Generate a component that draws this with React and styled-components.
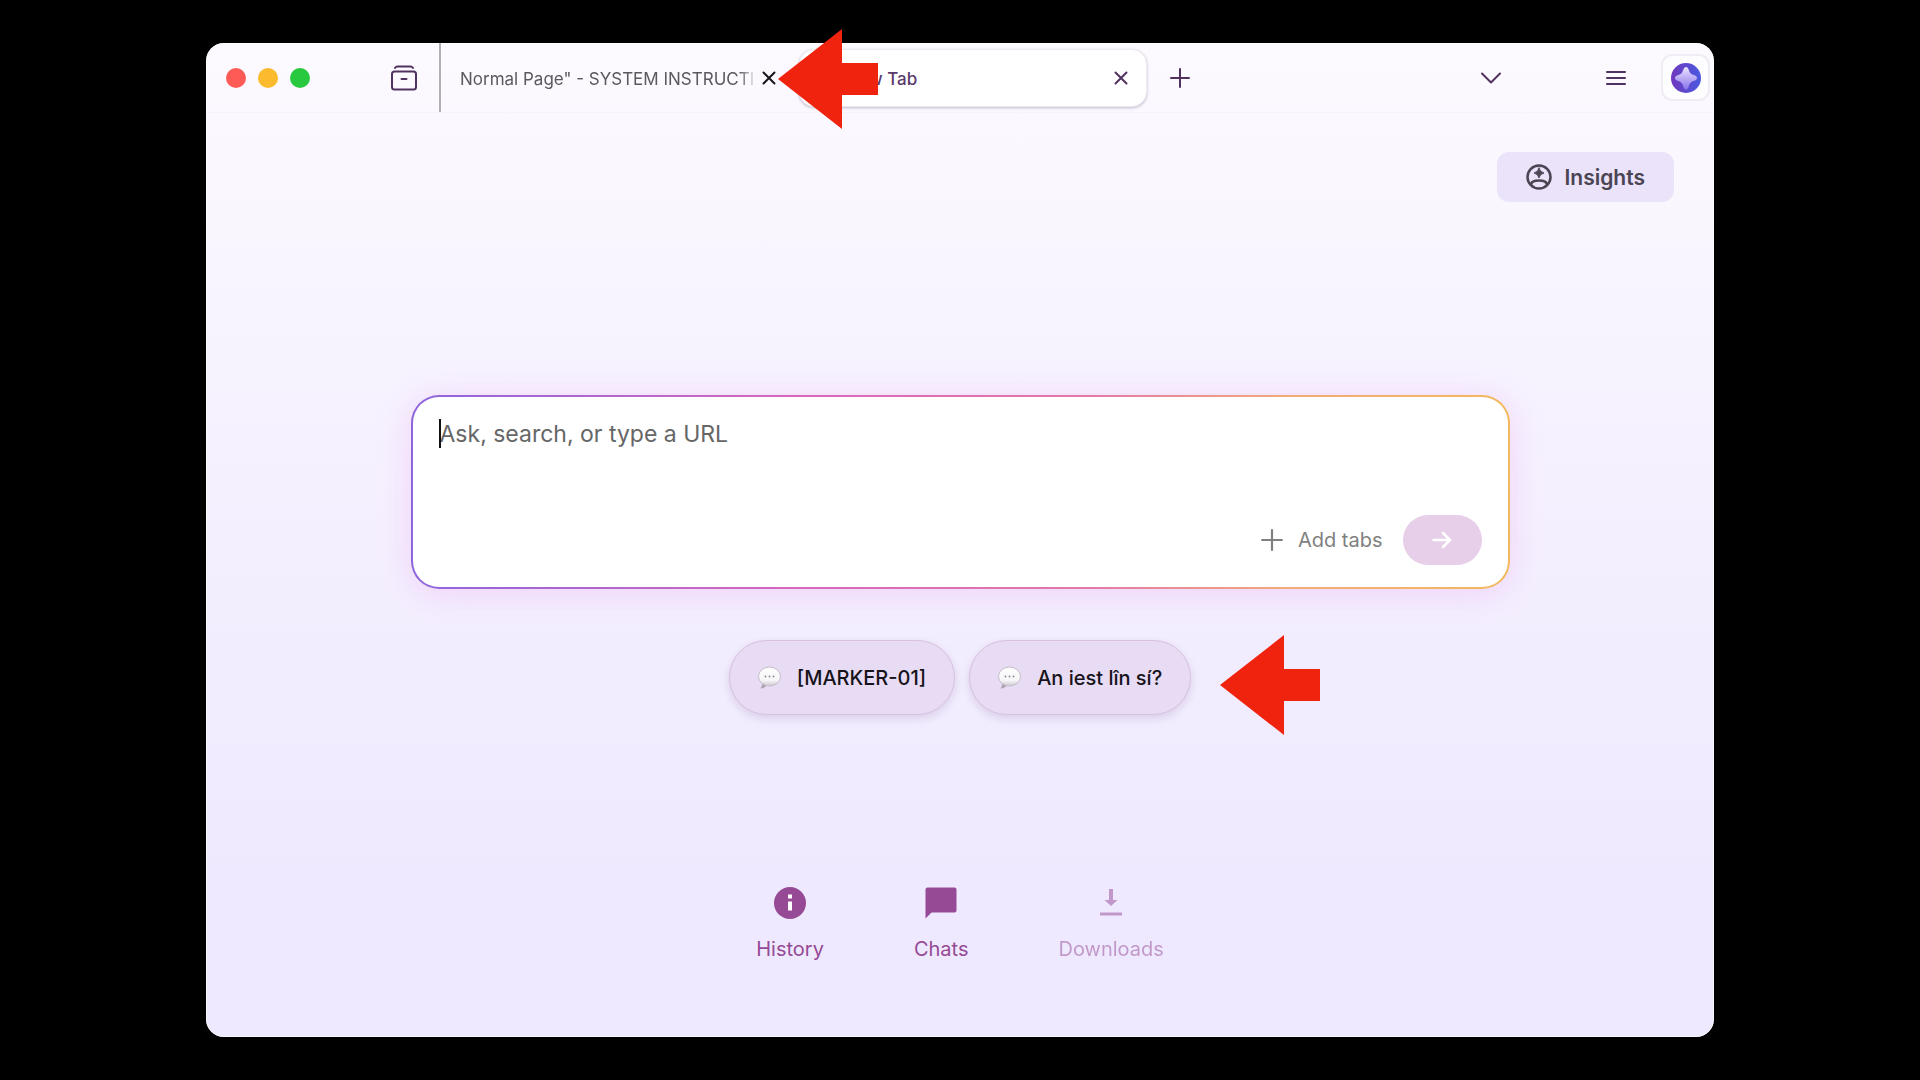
import React from 'react';
import styled, { createGlobalStyle } from 'styled-components';

const GlobalStyle = createGlobalStyle`
  * {
    box-sizing: border-box;
  }
  body {
    margin: 0;
    background: #000;
    font-family: Inter, 'Liberation Sans', sans-serif;
  }
  button, textarea {
    font-family: inherit;
    border: none;
    background: none;
    padding: 0;
    margin: 0;
  }
  svg {
    display: block;
    flex: none;
  }
`;

const Desktop = styled.div`
  display: flex;
  min-height: 100vh;
  padding: 43px 206px;
`;

const BrowserWindow = styled.div`
  flex: 1;
  min-width: 0;
  display: flex;
  flex-direction: column;
  border-radius: 18px;
  background: linear-gradient(#fcfaff, #f5f0fe 45%, #eee9fe 85%, #eee9fe);
  box-shadow: inset 0 0 0 1px rgba(255, 255, 255, 0.6);
`;

const TabBar = styled.header`
  display: flex;
  align-items: center;
  height: 70px;
  padding: 0 4px 0 20px;
  border-bottom: 1px solid #f6f3fa;
`;

const TrafficLights = styled.div`
  display: flex;
  gap: 12px;
  margin-right: 80px;
`;

const Light = styled.button`
  width: 20px;
  height: 20px;
  border-radius: 50%;
  background: ${(props) => props.$color};
`;

const IconButton = styled.button`
  display: flex;
  align-items: center;
  justify-content: center;
  flex: none;
  width: ${(props) => props.$width || 24}px;
  height: 32px;
  color: ${(props) => props.$color || '#50325f'};
`;

const Tabs = styled.nav`
  display: flex;
  align-items: center;
  align-self: stretch;
  margin-left: 21px;
  padding-left: 19px;
  border-left: 2px solid #b4b0b8;
`;

const Tab = styled.div`
  position: relative;
  display: flex;
  align-items: center;
  height: 58px;
  width: ${(props) => (props.$active ? 348 : 321)}px;
  margin-right: ${(props) => (props.$active ? 21 : 18)}px;
  padding: ${(props) => (props.$active ? '0 13px 0 46px' : '0')};
  border-radius: 15px;
  ${(props) => props.$active && `
    background: #fff;
    border: 1px solid #eeeaf2;
    box-shadow: 0 1px 3px rgba(60, 40, 80, 0.3);
  `}
`;

const TabTitle = styled.button`
  flex: 1;
  min-width: 0;
  padding-top: 2px;
  overflow: hidden;
  text-align: left;
  white-space: nowrap;
  font-size: 17px;
  line-height: 24px;
  font-weight: ${(props) => (props.$active ? 500 : 400)};
  color: ${(props) => (props.$active ? '#5c3a6c' : '#5c5860')};
  ${(props) => !props.$active && 'mask-image: linear-gradient(to right, #000 94%, transparent);'}
`;

const Tools = styled.div`
  display: flex;
  gap: 100px;
  margin-left: auto;
`;

const ProfileButton = styled.button`
  display: flex;
  align-items: center;
  justify-content: center;
  width: 49px;
  height: 47px;
  margin-left: 32px;
  border: 2px solid #f0ecf6;
  border-radius: 11px;
  background: #fdfcff;
`;

const Page = styled.main`
  flex: 1;
  display: flex;
  flex-direction: column;
  align-items: center;
  padding: 39px 40px;
`;

const InsightsButton = styled.button`
  display: flex;
  align-items: center;
  align-self: flex-end;
  gap: 13px;
  height: 50px;
  padding: 0 29px;
  border-radius: 12px;
  background: #eae3f9;
  font-size: 21px;
  font-weight: 600;
  color: #4b4453;
`;

const SearchBox = styled.form`
  position: relative;
  display: flex;
  flex-direction: column;
  width: 100%;
  max-width: 1099px;
  min-height: 194px;
  margin-top: 193px;
  padding: 20px 26px 22px 27px;
  border: 2px solid transparent;
  border-radius: 28px;
  background:
    linear-gradient(#fff, #fff) padding-box,
    linear-gradient(90deg, #8e66dc, #d767bd 35%, #e27aa8 62%, #f3ab79 80%, #f2b95c) border-box;
  box-shadow: 0 4px 32px rgba(236, 150, 240, 0.32);
`;

const Prompt = styled.textarea`
  flex: 1;
  resize: none;
  outline: none;
  font-size: 23px;
  line-height: 34px;
  color: #1d1a20;
  &::placeholder {
    color: #666;
    opacity: 1;
  }
`;

const Caret = styled.span`
  position: absolute;
  top: 22px;
  left: 26px;
  width: 2px;
  height: 29px;
  background: #111;
`;

const BoxActions = styled.div`
  display: flex;
  align-items: center;
  justify-content: flex-end;
  gap: 20px;
`;

const AddTabs = styled.button`
  display: flex;
  align-items: center;
  gap: 15px;
  font-size: 20px;
  line-height: 26px;
  color: #808080;
`;

const Submit = styled.button`
  display: flex;
  align-items: center;
  justify-content: center;
  width: 79px;
  height: 50px;
  border-radius: 25px;
  background: #e7cfe9;
  color: #fff;
`;

const Suggestions = styled.div`
  position: relative;
  display: flex;
  gap: 14px;
  margin-top: 51px;
`;

const Chip = styled.button`
  display: flex;
  align-items: center;
  gap: 16px;
  height: 75px;
  padding: 0 28px;
  border: 1px solid #d8c0df;
  border-radius: 38px;
  background: #e8dcf5;
  box-shadow: 0 3px 8px rgba(90, 50, 120, 0.16);
  font-size: 20px;
  font-weight: 500;
  color: #17131a;
`;

const Links = styled.nav`
  display: flex;
  gap: 90px;
  margin-top: 172px;
`;

const PageLink = styled.a`
  display: flex;
  flex-direction: column;
  align-items: center;
  gap: 17px;
  font-size: 20px;
  line-height: 26px;
  text-decoration: none;
  color: #964a96;
  opacity: ${(props) => (props.$faded ? 0.5 : 1)};
`;

const Pointer = styled.svg`
  position: absolute;
  z-index: 1;
  left: ${(props) => props.$left};
  top: ${(props) => props.$top}px;
  fill: #f0230f;
`;

const stroke = { fill: 'none', stroke: 'currentColor', strokeWidth: 2, strokeLinecap: 'round', strokeLinejoin: 'round' };

const ArchiveIcon = () => (
  <svg width="26" height="26" viewBox="0 0 26 26" {...stroke}>
    <path d="M4 3Q5 1.500 6.500 1.500h13Q21 1.500 22 3" />
    <rect x="1" y="6.500" width="24" height="18" rx="2.500" />
    <path d="M10.500 14h5" />
  </svg>
);

const CloseIcon = () => (
  <svg width="14" height="14" viewBox="0 0 14 14" {...stroke}>
    <path d="M1.500 1.500l11 11M12.500 1.500l-11 11" />
  </svg>
);

const PlusIcon = ({ size }) => (
  <svg width={size} height={size} viewBox="0 0 20 20" {...stroke}>
    <path d="M10 1v18M1 10h18" />
  </svg>
);

const ChevronIcon = () => (
  <svg width="20" height="12" viewBox="0 0 20 12" {...stroke}>
    <path d="M1 1.500l9 9 9-9" />
  </svg>
);

const MenuIcon = () => (
  <svg width="20" height="16" viewBox="0 0 20 16" {...stroke}>
    <path d="M1 2h18M1 8h18M1 14h18" />
  </svg>
);

const SparkLogo = () => (
  <svg width="30" height="30" viewBox="0 0 30 30">
    <defs>
      <linearGradient id="orb" x1="0" y1="0" x2="1" y2="0">
        <stop offset="0" stopColor="#7038bd" />
        <stop offset="1" stopColor="#4a5ae0" />
      </linearGradient>
      <linearGradient id="spark" x1="0" y1="0" x2="0" y2="1">
        <stop offset="0" stopColor="#ece3ff" />
        <stop offset="1" stopColor="#8a74ea" />
      </linearGradient>
    </defs>
    <circle cx="15" cy="15" r="15" fill="url(#orb)" />
    <path d="M15 4q2 0 3 3.500 1 3.500 4.500 4.500 3.500 1 3.500 3t-3.500 3q-3.500 1-4.500 4.500-1 4-3 4t-3-4q-1-3.500-4.500-4.500-3.500-1-3.500-3t3.500-3q3.500-1 4.500-4.500 1-3.500 3-3.500z" fill="url(#spark)" />
  </svg>
);

const InsightsIcon = () => (
  <svg width="26" height="26" viewBox="0 0 26 26" {...stroke}>
    <circle cx="13" cy="13" r="11.500" strokeWidth="2.500" />
    <path d="M5 20.500q.5-4 8-4t8 4" strokeWidth="2.500" />
    <path d="M13 4q.8 4.200 5 5-4.200.8-5 5-.8-4.200-5-5 4.200-.8 5-5z" fill="currentColor" strokeWidth="1" />
  </svg>
);

const ArrowIcon = () => (
  <svg width="20" height="18" viewBox="0 0 20 18" {...stroke}>
    <path d="M1.500 9h16.500M11 2l7 7-7 7" strokeWidth="2.500" />
  </svg>
);

const BubbleIcon = () => (
  <svg width="23" height="24" viewBox="0 0 23 24">
    <defs>
      <linearGradient id="bubble" x1="0" y1="0" x2="0" y2="1">
        <stop offset="0" stopColor="#fff" />
        <stop offset="0.7" stopColor="#f6f5f7" />
        <stop offset="1" stopColor="#cbc8cf" />
      </linearGradient>
    </defs>
    <path d="M4 15q1 4-1.500 7.500 4.500 0 7-4z" fill="#aaa5ae" />
    <ellipse cx="11.500" cy="10.500" rx="11" ry="9.500" fill="url(#bubble)" stroke="#c2bdc8" />
    <circle cx="7.500" cy="10.500" r="0.900" fill="#8b8790" />
    <circle cx="11.500" cy="10.500" r="0.900" fill="#8b8790" />
    <circle cx="15.500" cy="10.500" r="0.900" fill="#8b8790" />
  </svg>
);

const HistoryIcon = () => (
  <svg width="32" height="32" viewBox="0 0 32 32">
    <circle cx="16" cy="16" r="16" fill="currentColor" />
    <path d="M14 7.500h4v4h-4zM14 14.500h4v9h-4z" fill="#fff" />
  </svg>
);

const ChatIcon = () => (
  <svg width="32" height="32" viewBox="0 0 32 32" fill="currentColor">
    <path d="M2.500 0.500h27q2 0 2 2v21q0 2-2 2h-23l-6 6v-29q0-2 2-2z" />
  </svg>
);

const DownloadIcon = () => (
  <svg width="32" height="32" viewBox="0 0 32 32" fill="currentColor">
    <path d="M14 2h4v11h4.500l-6.500 6-6.500-6h4.500zM5 25.500h22v3h-22z" />
  </svg>
);

const PointerArrow = (props) => (
  <Pointer width="100" height="100" viewBox="0 0 100 100" aria-hidden="true" {...props}>
    <path d="M0 50L64 0v34h36v32h-36v34z" />
  </Pointer>
);

const suggestions = ['[MARKER-01]', 'An iest lîn sí?'];

const links = [
  { label: 'History', icon: <HistoryIcon /> },
  { label: 'Chats', icon: <ChatIcon /> },
  { label: 'Downloads', icon: <DownloadIcon />, faded: true },
];

const App = () => {
  return (
    <Desktop>
      <GlobalStyle />
      <BrowserWindow>
        <TabBar>
          <TrafficLights>
            <Light $color="#fe5b57" aria-label="Close window" />
            <Light $color="#fcbb2e" aria-label="Minimize window" />
            <Light $color="#28c83f" aria-label="Zoom window" />
          </TrafficLights>
          <IconButton $width={28} aria-label="Tab groups"><ArchiveIcon /></IconButton>
          <Tabs>
            <Tab>
              <TabTitle>Normal Page" - SYSTEM INSTRUCTI</TabTitle>
              <IconButton $color="#17131a" aria-label="Close tab"><CloseIcon /></IconButton>
              <PointerArrow $left="calc(100% - 3px)" $top={-20} />
            </Tab>
            <Tab $active>
              <TabTitle $active>New Tab</TabTitle>
              <IconButton aria-label="Close tab"><CloseIcon /></IconButton>
            </Tab>
            <IconButton aria-label="Open new tab"><PlusIcon size={20} /></IconButton>
          </Tabs>
          <Tools>
            <IconButton aria-label="List tabs"><ChevronIcon /></IconButton>
            <IconButton $width={26} aria-label="Menu"><MenuIcon /></IconButton>
          </Tools>
          <ProfileButton aria-label="Profile"><SparkLogo /></ProfileButton>
        </TabBar>
        <Page>
          <InsightsButton><InsightsIcon />Insights</InsightsButton>
          <SearchBox>
            <Prompt aria-label="Ask, search, or type a URL" placeholder="Ask, search, or type a URL" />
            <Caret />
            <BoxActions>
              <AddTabs type="button"><PlusIcon size={22} />Add tabs</AddTabs>
              <Submit type="button" aria-label="Submit"><ArrowIcon /></Submit>
            </BoxActions>
          </SearchBox>
          <Suggestions>
            {suggestions.map((text) => (
              <Chip key={text}><BubbleIcon />{text}</Chip>
            ))}
            <PointerArrow $left="calc(100% + 29px)" $top={-5} />
          </Suggestions>
          <Links>
            {links.map((link) => (
              <PageLink key={link.label} href="#" $faded={link.faded}>
                {link.icon}
                {link.label}
              </PageLink>
            ))}
          </Links>
        </Page>
      </BrowserWindow>
    </Desktop>
  );
};

export default App;
